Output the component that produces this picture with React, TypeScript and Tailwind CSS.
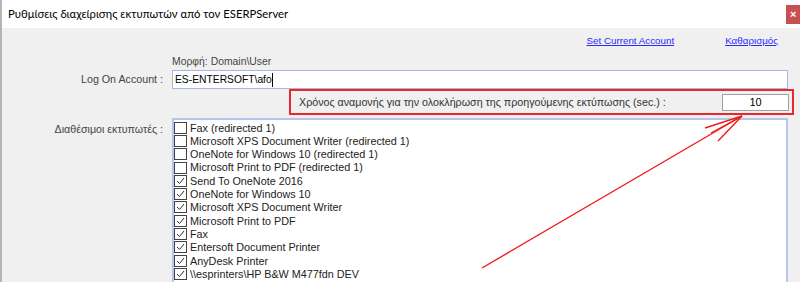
import React from 'react';

const printers = [
  { name: 'Fax (redirected 1)', checked: false },
  { name: 'Microsoft XPS Document Writer (redirected 1)', checked: false },
  { name: 'OneNote for Windows 10 (redirected 1)', checked: false },
  { name: 'Microsoft Print to PDF (redirected 1)', checked: false },
  { name: 'Send To OneNote 2016', checked: true },
  { name: 'OneNote for Windows 10', checked: true },
  { name: 'Microsoft XPS Document Writer', checked: true },
  { name: 'Microsoft Print to PDF', checked: true },
  { name: 'Fax', checked: true },
  { name: 'Entersoft Document Printer', checked: true },
  { name: 'AnyDesk Printer', checked: true },
  { name: '\\\\esprinters\\HP B&W M477fdn DEV', checked: true },
];

function Check({ checked }: { checked: boolean }) {
  return (
    <span className="w-[13px] h-[12px] border border-[#444] bg-white flex-shrink-0 flex items-center justify-center">
      {checked && (
        <svg width="9" height="8" viewBox="0 0 9 8">
          <path d="M1 4 L3.5 6.5 L8 1" fill="none" stroke="#333" strokeWidth="1" />
        </svg>
      )}
    </span>
  );
}

export default function App() {
  return (
    <div
      className="relative w-[800px] h-[282px] overflow-hidden bg-[#f0f0f0] border-l-2 border-[#b4b4b4] text-[10.7px] text-[#1e1e1e]"
      style={{ fontFamily: '"Liberation Sans", Arial, sans-serif' }}
    >
      {/* title bar */}
      <div className="h-[28px] bg-white flex items-center justify-between pl-[6px]">
        <span className="text-[11.3px] text-black" style={{ fontFamily: 'Lato, "Open Sans", sans-serif' }}>
          Ρυθμίσεις διαχείρισης εκτυπωτών από τον ESERPServer
        </span>
        <div className="w-[14px] h-[19px] bg-[#c75050] self-start mt-[5px] flex items-center pl-[4px]">
          <span className="text-white text-[11px] font-bold leading-none">×</span>
        </div>
      </div>

      {/* links */}
      <div className="flex justify-end gap-[51px] pr-[22px] pt-[6px] h-[28px] text-[9.8px] text-[#2b2bff]">
        <span className="underline">Set Current Account</span>
        <span className="underline">Καθαρισμός</span>
      </div>

      <div className="flex pl-[170px] h-[12px] items-center text-[10.4px] text-[#444]">
        Μορφή: Domain\User
      </div>

      <div className="flex items-center mt-[2px]">
        <div className="w-[170px] pr-[9px] text-right text-[#444]">Log On Account :</div>
        <div className="w-[616px] h-[19px] bg-white border border-[#a7b6e3] flex items-center px-[2px] text-[10.3px] text-black">
          ES-ENTERSOFT\afo<span className="w-px h-[14px] bg-black" />
        </div>
      </div>

      <div className="flex justify-end pr-[6px]">
        <div className="w-[505px] h-[26px] border-2 border-[#e8282d] flex items-center justify-between pl-[8px] pr-[3px]">
          <span className="text-[#333]">
            Χρόνος αναμονής για την ολοκλήρωση της προηγούμενης εκτύπωσης (sec.) :
          </span>
          <div className="w-[67px] h-[17px] bg-white border border-[#a0a0a0] flex items-center justify-center text-[11px] text-black">
            10
          </div>
        </div>
      </div>

      <div className="flex mt-[3px]">
        <div className="w-[170px] pr-[9px] pt-[3px] text-right text-[#444]">Διαθέσιμοι εκτυπωτές :</div>
        <div className="w-[616px] h-[200px] bg-white border-2 border-[#b7c4ee] pt-[1px]">
          {printers.map((p) => (
            <div key={p.name} className="flex items-center gap-[3px] h-[13.3px] text-[10.8px] text-[#222]">
              <Check checked={p.checked} />
              <span>{p.name}</span>
            </div>
          ))}
        </div>
      </div>

      {/* annotation arrow */}
      <svg className="absolute left-0 top-0 pointer-events-none" width="800" height="282">
        <g stroke="#f21b1b" strokeWidth="1.4" fill="none">
          <line x1="480" y1="268" x2="740" y2="116" />
          <line x1="703" y1="128" x2="740" y2="116" />
          <line x1="709" y1="133" x2="740" y2="116" />
          <line x1="716" y1="141" x2="740" y2="116" />
        </g>
      </svg>
    </div>
  );
}
